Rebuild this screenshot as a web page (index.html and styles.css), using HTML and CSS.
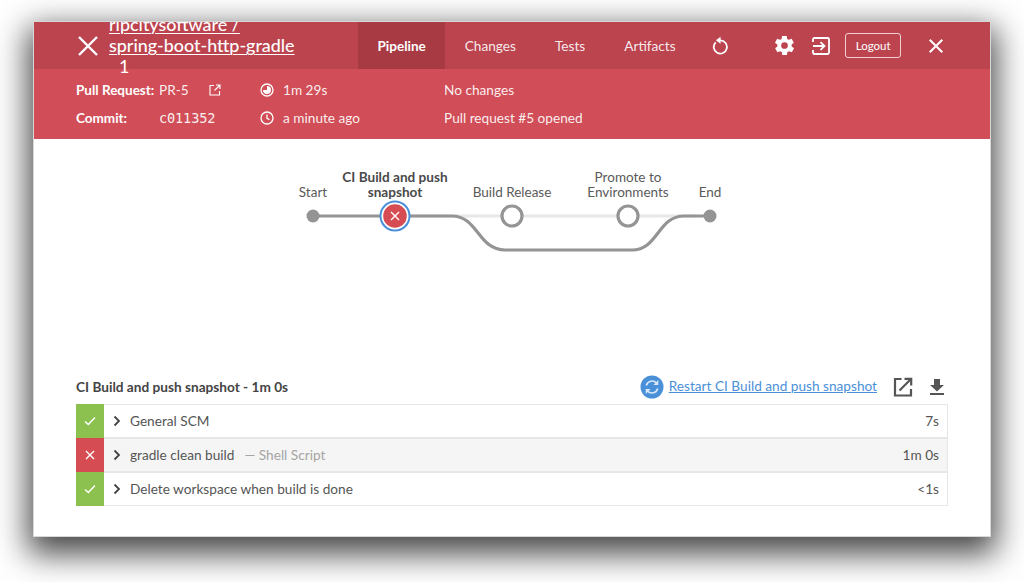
FILE: index.html
```html
<!DOCTYPE html>
<html lang="en">
<head>
<meta charset="utf-8">
<title>spring-boot-http-gradle</title>
<link rel="stylesheet" href="styles.css">
</head>
<body>
<main class="window">
  <header class="topbar">
    <svg class="icon close-main" viewBox="0 0 20 20"><path d="M1 1L19 19M19 1L1 19"/></svg>
    <h1 class="title"><a href="#">ripcitysoftware /</a> <a href="#">spring-boot-http-gradle</a><span class="run-no">1</span></h1>
    <nav class="tabs">
      <a class="tab active" href="#">Pipeline</a>
      <a class="tab" href="#">Changes</a>
      <a class="tab" href="#">Tests</a>
      <a class="tab" href="#">Artifacts</a>
    </nav>
    <svg class="icon replay" viewBox="0 0 18 20"><path d="M4.200 6.400A7.400 7.400 0 1 0 9 4.300"/><path class="solid" d="M9.600 0.200V8L4.400 4.200Z"/></svg>
    <svg class="gear" viewBox="0 0 24 24"><path d="M19.400 13c.1-.3.1-.6.1-1s0-.7-.1-1l2.100-1.600c.2-.2.2-.4.1-.6l-2-3.500c-.1-.2-.4-.3-.6-.2l-2.500 1c-.5-.4-1.100-.7-1.700-1l-.4-2.700c0-.2-.2-.4-.5-.4h-4c-.2 0-.5.2-.5.4l-.4 2.700c-.6.3-1.200.6-1.700 1l-2.500-1c-.2-.1-.5 0-.6.2l-2 3.500c-.1.2-.1.4.1.6L4.600 11c0 .3-.1.6-.1 1s0 .7.1 1l-2.100 1.600c-.2.2-.2.4-.1.6l2 3.500c.1.2.4.3.6.2l2.500-1c.5.4 1.100.7 1.700 1l.4 2.700c0 .2.3.4.5.4h4c.3 0 .5-.2.5-.4l.4-2.700c.6-.3 1.200-.6 1.700-1l2.500 1c.2.1.5 0 .6-.2l2-3.500c.1-.2.1-.4-.1-.6L19.400 13zM12 15.500a3.500 3.500 0 1 1 0-7 3.500 3.500 0 0 1 0 7z"/></svg>
    <svg class="icon exit" viewBox="0 0 18 18"><path d="M1 5V2.400C1 1.600 1.600 1 2.400 1h13.200c.8 0 1.400.6 1.400 1.400v13.200c0 .8-.6 1.400-1.400 1.400H2.400C1.600 17 1 16.400 1 15.600V13"/><path d="M1 9H12M8.500 5.200L12.500 9L8.500 12.800"/></svg>
    <button class="logout" type="button">Logout</button>
    <svg class="icon close-side" viewBox="0 0 14 14"><path d="M.7.7L13.300 13.300M13.300.7L.7 13.300"/></svg>
  </header>

  <section class="summary">
    <div class="summary-col meta">
      <div class="meta-row"><b>Pull Request:</b><span>PR-5</span>
        <svg class="ext" viewBox="0 0 12 12"><path d="M5 1.500H1V11H10.500V7M7 1H11V5M11 1L5.500 6.500"/></svg></div>
      <div class="meta-row"><b>Commit:</b><code>c011352</code></div>
    </div>
    <div class="summary-col times">
      <div class="time-row"><svg class="clock" viewBox="0 0 14 14"><circle cx="7" cy="7" r="6"/><path class="solid" d="M7 3A4 4 0 1 1 3 7H7Z"/></svg>1m 29s</div>
      <div class="time-row"><svg class="clock" viewBox="0 0 14 14"><circle cx="7" cy="7" r="6"/><path d="M7 3.500V7.300L9.500 8.800"/></svg>a minute ago</div>
    </div>
    <div class="summary-col">
      <div>No changes</div>
      <div>Pull request #5 opened</div>
    </div>
  </section>

  <section class="graph-wrap">
    <svg class="graph" viewBox="0 0 460 100" width="460" height="100">
      <path class="track-light" d="M130 56H415"/>
      <path class="track" d="M33 56H115"/>
      <path class="track" d="M130 56H172C198 56 198 90 225 90H352C378 90 378 56 404 56H430"/>
      <circle class="dot" cx="33" cy="56" r="6.500"/>
      <circle class="dot" cx="430" cy="56" r="6.500"/>
      <circle class="sel-ring" cx="115" cy="56" r="14.500"/>
      <circle class="sel" cx="115" cy="56" r="11.800"/>
      <path class="sel-x" d="M111 52L119 60M119 52L111 60"/>
      <circle class="pending" cx="232" cy="56" r="10"/>
      <circle class="pending" cx="348" cy="56" r="10"/>
      <text class="lbl" x="33" y="36.500">Start</text>
      <text class="lbl strong" x="115" y="21.500">CI Build and push</text>
      <text class="lbl strong" x="115" y="36.500">snapshot</text>
      <text class="lbl" x="232" y="36.500">Build Release</text>
      <text class="lbl" x="348" y="21.500">Promote to</text>
      <text class="lbl" x="348" y="36.500">Environments</text>
      <text class="lbl" x="430" y="36.500">End</text>
    </svg>
  </section>

  <section class="steps">
    <div class="steps-head">
      <h2>CI Build and push snapshot - 1m 0s</h2>
      <svg class="restart" viewBox="0 0 24 24"><circle cx="12" cy="12" r="11.500"/><path class="arc" d="M6.300 10.500A6 6 0 0 1 16.500 8M17.700 13.500A6 6 0 0 1 7.500 16"/><path class="tip" d="M18.300 5V10H13.400ZM5.700 19V14H10.600Z"/></svg>
      <a class="restart-link" href="#">Restart CI Build and push snapshot</a>
      <svg class="tool open" viewBox="0 0 20 20"><path d="M8.500 2H2V18.500H18V12"/><path d="M6.500 13.500L17.500 2.500M11.500 1.800H18.200V8.500"/></svg>
      <svg class="tool save" viewBox="0 0 16 18"><path class="solid" d="M5 1H11V7H15L8 13.500L1 7H5ZM1 15H15V17H1Z"/></svg>
    </div>
    <ul class="step-list">
      <li class="step">
        <span class="status ok"><svg viewBox="0 0 12 10"><path d="M1 5.500L4.300 8.500L11 1.500"/></svg></span>
        <svg class="chev" viewBox="0 0 8 12"><path d="M1.500 1.500L6 6L1.500 10.500"/></svg>
        <span class="step-name">General SCM</span><span class="dur">7s</span>
      </li>
      <li class="step failed">
        <span class="status bad"><svg viewBox="0 0 10 10"><path d="M1 1L9 9M9 1L1 9"/></svg></span>
        <svg class="chev" viewBox="0 0 8 12"><path d="M1.500 1.500L6 6L1.500 10.500"/></svg>
        <span class="step-name">gradle clean build</span><span class="step-note">— Shell Script</span><span class="dur">1m 0s</span>
      </li>
      <li class="step">
        <span class="status ok"><svg viewBox="0 0 12 10"><path d="M1 5.500L4.300 8.500L11 1.500"/></svg></span>
        <svg class="chev" viewBox="0 0 8 12"><path d="M1.500 1.500L6 6L1.500 10.500"/></svg>
        <span class="step-name">Delete workspace when build is done</span><span class="dur">&lt;1s</span>
      </li>
    </ul>
  </section>
</main>
</body>
</html>
```

FILE: styles.css
```css
* { box-sizing: border-box; }
html, body { margin: 0; height: 100%; overflow: hidden; }
body {
  padding: 22px 34px 0;
  background: #fff;
  font-family: Lato, "Noto Sans", sans-serif;
  font-size: 13.650px;
  color: #4a4a4a;
}
.window {
  width: 956px;
  height: 514px;
  background: #fff;
  overflow: hidden;
  box-shadow: 0 0 0 1px #d8d8d8, 0 12px 30px 6px rgba(0, 0, 0, .72);
}
.icon { fill: none; stroke: #fff; stroke-width: 2; flex: none; }
.solid { fill: currentColor; stroke: none; }

.topbar {
  position: relative;
  z-index: 1;
  display: flex;
  align-items: center;
  height: 47px;
  padding-left: 44px;
  background: #bc444f;
  color: #fff;
}
.close-main { width: 20px; height: 20px; stroke-width: 2.400; margin-right: 11px; }
.title {
  width: 249px;
  flex: none;
  margin: 0;
  font-size: 17.900px;
  font-weight: 500;
  line-height: 21px;
}
.title a { color: #fff; text-decoration: underline; text-decoration-thickness: 1px; text-underline-offset: 2px; display: block; }
.run-no { display: block; padding-left: 10px; font-weight: 400; }
.tabs { display: flex; height: 47px; margin-right: 17px; }
.tab {
  display: flex;
  align-items: center;
  padding: 0 19.500px;
  color: rgba(255, 255, 255, .9);
  text-decoration: none;
  font-size: 13.650px;
}
.tab.active { background: #a83a44; color: #fff; font-weight: 700; font-size: 13.500px; }
.replay { width: 16px; height: 19px; color: #fff; margin-right: 45px; }
.replay .solid { fill: #fff; }
.gear { width: 23px; height: 23px; fill: #fff; flex: none; margin-right: 16px; }
.exit { width: 18px; height: 18px; stroke-width: 1.800; margin-right: 15px; }
.logout {
  width: 56px;
  height: 25px;
  padding: 0;
  background: none;
  border: 1px solid rgba(255, 255, 255, .75);
  border-radius: 3px;
  color: #fff;
  font: 400 11.500px Lato, sans-serif;
  margin-right: 28px;
}
.close-side { width: 14px; height: 14px; }

.summary {
  display: flex;
  height: 70px;
  padding: 7px 0 0 42px;
  background: #d14e58;
  color: rgba(255, 255, 255, .92);
  line-height: 28px;
  font-size: 13.650px;
}
.summary-col { flex: none; }
.meta { width: 184px; }
.times { width: 184px; }
.meta-row { display: flex; align-items: center; height: 28px; }
.meta-row b { width: 83px; color: #fff; font-weight: 700; font-size: 13.500px; flex: none; }
.meta-row code { font: 13.600px "DejaVu Sans Mono", monospace; letter-spacing: -.15px; }
.ext { width: 12px; height: 12px; margin-left: 20px; fill: none; stroke: #fff; stroke-width: 1.100; }
.time-row { display: flex; align-items: center; height: 28px; }
.clock { width: 14px; height: 14px; margin-right: 9px; fill: none; stroke: #fff; stroke-width: 1.300; color: #fff; }
.clock .solid { fill: #fff; }

.graph-wrap { height: 234px; padding: 21px 0 0 246px; }
.graph { display: block; overflow: visible; }
.track { fill: none; stroke: #949494; stroke-width: 3.200; }
.track-light { fill: none; stroke: #e8e8e8; stroke-width: 3.200; }
.dot { fill: #949494; }
.sel-ring { fill: #fff; stroke: #4a90d9; stroke-width: 2; }
.sel { fill: #d54c53; }
.sel-x { fill: none; stroke: #fff; stroke-width: 1.400; }
.pending { fill: #fff; stroke: #949494; stroke-width: 3.200; }
.lbl { font: 400 13.500px Lato, sans-serif; fill: #5a5a5a; text-anchor: middle; }
.lbl.strong { font-weight: 700; fill: #4a4a4a; font-size: 13.600px; }

.steps { padding: 0 42px; }
.steps-head { display: flex; align-items: center; height: 31px; padding-bottom: 3px; }
.steps-head h2 { margin: 0 auto 0 0; font-size: 13.650px; font-weight: 700; color: #444; }
.restart { width: 24px; height: 24px; flex: none; margin-right: 5px; }
.restart circle { fill: #4a90d9; }
.restart .arc { fill: none; stroke: #d8e8f8; stroke-width: 1.600; }
.restart .tip { fill: #d8e8f8; }
.restart-link { color: #4a90d9; font-size: 13.650px; margin: 0 16px 2px 0; text-decoration-thickness: 1px; }
.tool { flex: none; color: #555; }
.tool.open { width: 20px; height: 20px; fill: none; stroke: #555; stroke-width: 2.200; margin-right: 16px; }
.tool.save { width: 16px; height: 18px; margin-right: 3px; }

.step-list { list-style: none; margin: 0; padding: 0; }
.step {
  display: flex;
  align-items: center;
  height: 34px;
  border: 1px solid #e6e6e6;
  border-left: 0;
  font-size: 13.650px;
  color: #555;
  padding-right: 8px;
}
.step.failed { background: #f5f5f5; border-width: 1px; }
.status {
  display: flex;
  align-items: center;
  justify-content: center;
  width: 28px;
  align-self: stretch;
  margin: -1px 0;
  flex: none;
}
.status.ok { background: #8cc04f; }
.status.bad { background: #d54c53; }
.status svg { width: 12px; height: 10px; fill: none; stroke: #fff; stroke-width: 1.400; }
.chev { width: 8px; height: 12px; margin: 0 9px 0 9px; flex: none; fill: none; stroke: #444; stroke-width: 1.800; }
.step-note { margin-left: 10px; color: #a5a5a5; }
.dur { margin-left: auto; }
```
